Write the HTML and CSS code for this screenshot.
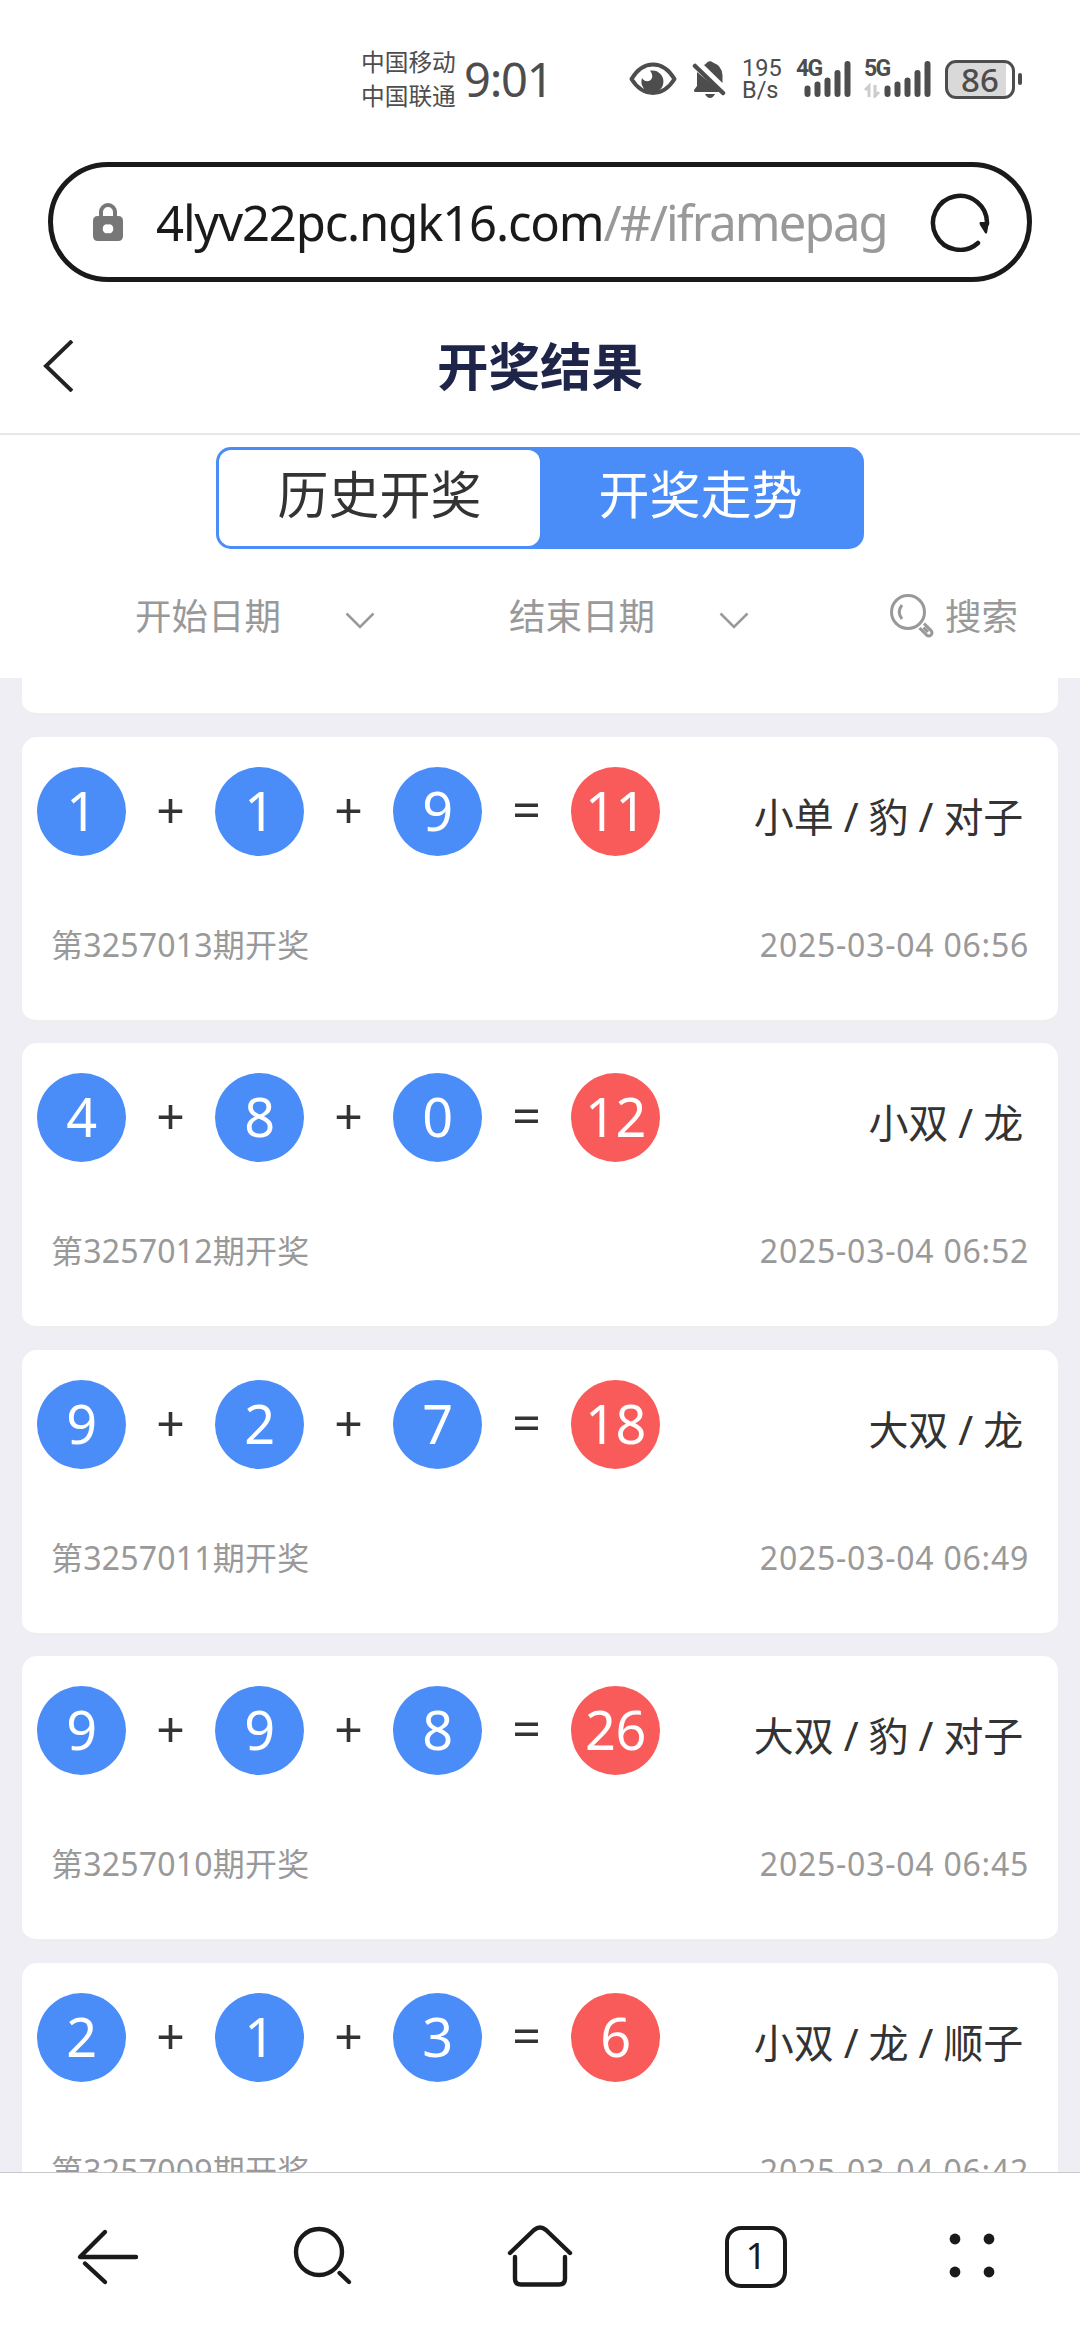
FILE: index.html
```html
<!DOCTYPE html>
<html lang="zh-CN">
<head>
    <meta charset="UTF-8">
    <meta name="viewport" content="width=device-width, initial-scale=1.0">
    <title>开奖结果</title>
    <link rel="stylesheet" href="styles.css">
</head>
<body>

    <div class="status">
        <div class="carrier">
            <span>中国移动</span>
            <span>中国联通</span>
        </div>
        <div class="clock">9:01</div>
        <svg class="eye" width="48" height="34" viewBox="0 0 48 34">
            <path d="M2.500 17C14-2.500 34-2.500 45.500 17C34 35.500 14 35.500 2.500 17Z" fill="none" stroke="#4d4d4d" stroke-width="4" stroke-linejoin="round"/>
            <path d="M23 8.500A11 11 0 1 1 13 16C17 23 28 18 21 8.500Z" fill="#4d4d4d"/>
        </svg>
        <svg class="bell" width="34" height="38" viewBox="0 0 34 38">
            <path d="M5 12L29 32H3.500Q1.500 32 2 30L5 26ZM12 5Q14 4 15 2.500Q18 0 21 2.500Q30 6 30.500 15V23ZM13 34H23Q21 38 18 38Q15 38 13 34Z" fill="#4d4d4d"/>
            <path d="M3 6L31 33" stroke="#4d4d4d" stroke-width="4.500" stroke-linecap="round"/>
        </svg>
        <div class="speed">
            <span>195</span>
            <span>B/s</span>
        </div>
        <div class="signal">
            <b>4G</b>
            <svg width="56" height="38" viewBox="0 0 56 38">
                <path d="M11.500 28.500V34M21.500 24.500V34M31.500 20.500V34M41.500 13V34M51.500 4V34" stroke="#4d4d4d" stroke-width="6" stroke-linecap="round"/>
            </svg>
        </div>
        <div class="signal">
            <b>5G</b>
            <svg width="68" height="38" viewBox="0 0 68 38">
                <path d="M5 37V26L1 30M11 25V36L15 32" fill="none" stroke="#ccc" stroke-width="3"/>
                <path d="M23.500 28.500V34M33.500 24.500V34M43.500 20.500V34M53.500 13V34M63.500 4V34" stroke="#4d4d4d" stroke-width="6" stroke-linecap="round"/>
            </svg>
        </div>
        <div class="battery"><span>86</span></div>
        <div class="nub"></div>
    </div>

    <div class="urlbar">
        <svg class="lock" width="30" height="40" viewBox="0 0 30 40">
            <path d="M8 17V10a7 7 0 0 1 14 0v7" fill="none" stroke="#777" stroke-width="4"/>
            <path fill-rule="evenodd" d="M5 14H25Q30 14 30 19V34Q30 39 25 39H5Q0 39 0 34V19Q0 14 5 14ZM15 22.500A4 4.500 0 1 0 15 31A4 4.500 0 1 0 15 22.500Z" fill="#777"/>
        </svg>
        <div class="url"><span class="host">4lyv22pc.ngk16.com</span><span class="path">/#/iframepag</span></div>
        <svg class="reload" width="60" height="60" viewBox="0 0 60 60">
            <path d="M48 51A27 27 0 1 1 57 32" fill="none" stroke="#1a1a1a" stroke-width="4.500" stroke-linecap="round"/>
            <path d="M50 30H59L57 41Q56 42 55 41L50 33Q49 31 50 30Z" fill="#1a1a1a"/>
        </svg>
    </div>

    <header class="hdr">
        <svg class="back" width="30" height="52" viewBox="0 0 30 52">
            <path d="M29 1L3 26L29 51" fill="none" stroke="#222" stroke-width="4"/>
        </svg>
        <h1>开奖结果</h1>
    </header>

    <div class="filtre">
        <div class="tabs">
            <div class="tab">历史开奖</div>
            <div class="tab active">开奖走势</div>
        </div>
        <div class="dates">
            <div class="date">
                <span>开始日期</span>
                <svg width="30" height="17" viewBox="0 0 30 17"><path d="M1.500 1.500L15 15L28.500 1.500" fill="none" stroke="#999" stroke-width="2.500"/></svg>
            </div>
            <div class="date">
                <span>结束日期</span>
                <svg width="30" height="17" viewBox="0 0 30 17"><path d="M1.500 1.500L15 15L28.500 1.500" fill="none" stroke="#999" stroke-width="2.500"/></svg>
            </div>
            <div class="search">
                <svg width="44" height="44" viewBox="0 0 44 44" fill="none" stroke="#999" stroke-width="3">
                    <circle cx="18" cy="18" r="16.500"/>
                    <path d="M12 11Q6.500 18 12 25"/>
                    <path d="M29.500 34L36.500 41Q39 43 41 41Q43 39 41 36.500L34 29.500M33.500 33.500L38 38"/>
                </svg>
                <span>搜索</span>
            </div>
        </div>
    </div>

    <main class="list">
        <div class="card first"></div>

        <div class="card">
            <div class="row">
                <i class="ball">1</i><i class="op">+</i><i class="ball">1</i><i class="op">+</i><i class="ball">9</i><i class="op">=</i><i class="ball red">11</i>
                <span class="result">小单 / 豹 / 对子</span>
            </div>
            <div class="info"><span>第3257013期开奖</span><span class="time">2025-03-04 06:56</span></div>
        </div>

        <div class="card">
            <div class="row">
                <i class="ball">4</i><i class="op">+</i><i class="ball">8</i><i class="op">+</i><i class="ball">0</i><i class="op">=</i><i class="ball red">12</i>
                <span class="result">小双 / 龙</span>
            </div>
            <div class="info"><span>第3257012期开奖</span><span class="time">2025-03-04 06:52</span></div>
        </div>

        <div class="card">
            <div class="row">
                <i class="ball">9</i><i class="op">+</i><i class="ball">2</i><i class="op">+</i><i class="ball">7</i><i class="op">=</i><i class="ball red">18</i>
                <span class="result">大双 / 龙</span>
            </div>
            <div class="info"><span>第3257011期开奖</span><span class="time">2025-03-04 06:49</span></div>
        </div>

        <div class="card">
            <div class="row">
                <i class="ball">9</i><i class="op">+</i><i class="ball">9</i><i class="op">+</i><i class="ball">8</i><i class="op">=</i><i class="ball red">26</i>
                <span class="result">大双 / 豹 / 对子</span>
            </div>
            <div class="info"><span>第3257010期开奖</span><span class="time">2025-03-04 06:45</span></div>
        </div>

        <div class="card">
            <div class="row">
                <i class="ball">2</i><i class="op">+</i><i class="ball">1</i><i class="op">+</i><i class="ball">3</i><i class="op">=</i><i class="ball red">6</i>
                <span class="result">小双 / 龙 / 顺子</span>
            </div>
            <div class="info"><span>第3257009期开奖</span><span class="time">2025-03-04 06:42</span></div>
        </div>
    </main>

    <nav class="nav">
        <div>
            <svg width="64" height="64" viewBox="0 0 64 64">
                <path d="M29 7L4 32H60"/>
                <path d="M9 38.500L29 57"/>
            </svg>
        </div>
        <div>
            <svg width="64" height="64" viewBox="0 0 64 64">
                <circle cx="27" cy="27" r="23"/>
                <path d="M47.500 48L57 57"/>
            </svg>
        </div>
        <div>
            <svg width="68" height="64" viewBox="0 0 68 64">
                <path d="M4 28L28 5Q34 0 40 5L64 28"/>
                <path d="M9 32V54Q9 59.500 15 59.500H53Q59 59.500 59 54V32"/>
            </svg>
        </div>
        <div><span class="count">1</span></div>
        <div>
            <svg class="dots" width="64" height="64" viewBox="0 0 64 64">
                <circle cx="15" cy="14" r="5.400"/>
                <circle cx="49" cy="14" r="5.400"/>
                <circle cx="15" cy="47" r="5.400"/>
                <circle cx="49" cy="47" r="5.400"/>
            </svg>
        </div>
    </nav>

</body>
</html>
```
FILE: styles.css
```css
* {
    box-sizing: border-box;
}

body {
    width: 1080px;
    height: 2340px;
    margin: 0;
    overflow: hidden;
    display: flex;
    flex-direction: column;
    background-color: #fff;
    font-family: "Noto Sans", "Noto Sans CJK SC", sans-serif;
    color: #333;
}

svg {
    display: block;
    flex: none;
}

i {
    font-style: normal;
}

.status {
    height: 162px;
    padding: 2px 0 6px 361px;
    display: flex;
    align-items: center;
    color: #4d4d4d;
    white-space: nowrap;
}

.carrier {
    width: 95px;
    display: flex;
    flex-direction: column;
    font-size: 23.7px;
    line-height: 34px;
}

.clock {
    width: 80px;
    margin-left: 8px;
    font-size: 47px;
    line-height: 68px;
    letter-spacing: -1.2px;
}

.eye {
    margin-left: 85px;
}

.bell {
    margin-left: 15px;
}

.speed {
    width: 42px;
    margin-left: 16px;
    display: flex;
    flex-direction: column;
    font-family: Roboto, sans-serif;
    font-size: 23.5px;
    line-height: 22px;
}

.signal {
    position: relative;
    margin-left: 12px;
}

/* network label sits over the short bars */
.signal b {
    position: absolute;
    left: 0;
    top: 0;
    font-family: Roboto, sans-serif;
    font-size: 23px;
    line-height: 18px;
    letter-spacing: -1.7px;
}

.battery {
    width: 70px;
    height: 39px;
    margin-left: 13px;
    border: 3px solid #4d4d4d;
    border-radius: 11px;
    background: linear-gradient(to right, #d9d9d9 58px, #fff 58px);
    display: flex;
    align-items: center;
    justify-content: center;
    font-size: 33px;
    font-weight: 500;
    line-height: 33px;
}

.nub {
    width: 4px;
    height: 12px;
    margin-left: 3px;
    border-radius: 2px;
    background-color: #4d4d4d;
}

.urlbar {
    width: 984px;
    height: 120px;
    margin-left: 48px;
    padding: 0 37px 0 40px;
    border: 5px solid #1a1a1a;
    border-radius: 60px;
    display: flex;
    align-items: center;
}

.url {
    width: 735px;
    margin-left: 33px;
    font-size: 49px;
    line-height: 68px;
    letter-spacing: -1.15px;
    white-space: nowrap;
    color: #1a1a1a;
}

.path {
    letter-spacing: -1.85px;
    color: #999;
}

.reload {
    margin-left: auto;
}

.hdr {
    height: 153px;
    display: flex;
    align-items: center;
    padding: 17px 43px 0;
    border-bottom: 2px solid #e5e7ea;
}

h1 {
    flex: 1;
    margin: 0 30px 0 0;
    text-align: center;
    font-size: 51.5px;
    font-weight: bold;
    line-height: 70px;
    color: #1e2549;
}

.filtre {
    height: 243px;
    padding-top: 12px;
}

.tabs {
    width: 648px;
    height: 102px;
    margin: 0 auto;
    padding: 3px;
    border-radius: 15px;
    background-color: #4a8df8;
    display: flex;
}

.tab {
    flex: 1;
    border-radius: 12px;
    background-color: #fff;
    text-align: center;
    font-size: 51px;
    line-height: 88px;
}

.tab.active {
    background-color: #4a8df8;
    color: #fff;
}

.dates {
    display: flex;
    align-items: center;
    height: 134px;
    padding-left: 135px;
    font-size: 36.5px;
    color: #999;
}

.dates span {
    margin-bottom: 3px;
}

.date {
    width: 374px;
    display: flex;
    align-items: center;
}

.date svg {
    margin: 8px 0 0 64px;
}

.search {
    margin-left: 7px;
    display: flex;
    align-items: center;
    gap: 11px;
}

.list {
    height: 1494px;
    overflow: hidden;
    padding: 0 22px;
    background-color: #efeef4;
}

.card {
    height: 286px;
    margin-bottom: 20.6px;
    padding: 30px 15px 0;
    border-bottom: 3px solid #eee;
    border-radius: 15px;
    background-color: #fff;
}

.card.first {
    height: 38px;
    border-radius: 0 0 15px 15px;
}

.row {
    display: flex;
}

.ball {
    width: 89px;
    height: 89px;
    border-radius: 50%;
    background-color: #4a8df8;
    color: #fff;
    text-align: center;
    font-size: 54px;
    line-height: 86px;
    letter-spacing: -0.5px;
}

.red {
    background-color: #f95a5a;
}

.op {
    width: 89px;
    text-align: center;
    font-size: 50px;
    line-height: 84px;
}

.result {
    margin: 20px 20px 0 auto;
    font-size: 40px;
    line-height: 59px;
    letter-spacing: -0.2px;
}

.info {
    display: flex;
    justify-content: space-between;
    margin: 66px 14px 0;
    font-size: 32px;
    line-height: 45px;
    letter-spacing: 0.2px;
    color: #999;
}

.time {
    letter-spacing: 0.75px;
}

.nav {
    flex: 1;
    border-top: 1px solid #c8c8c8;
    background-color: #fff;
    display: flex;
}

.nav div {
    flex: 1;
    display: flex;
    align-items: center;
    justify-content: center;
}

.nav svg {
    fill: none;
    stroke: #1a1a1a;
    stroke-width: 4.4;
    stroke-linecap: round;
    stroke-linejoin: round;
}

.nav .dots {
    fill: #1a1a1a;
    stroke: none;
}

.count {
    width: 62px;
    height: 62px;
    border: 4.5px solid #1a1a1a;
    border-radius: 16px;
    text-align: center;
    font-size: 37px;
    line-height: 50px;
    color: #1a1a1a;
}
```
